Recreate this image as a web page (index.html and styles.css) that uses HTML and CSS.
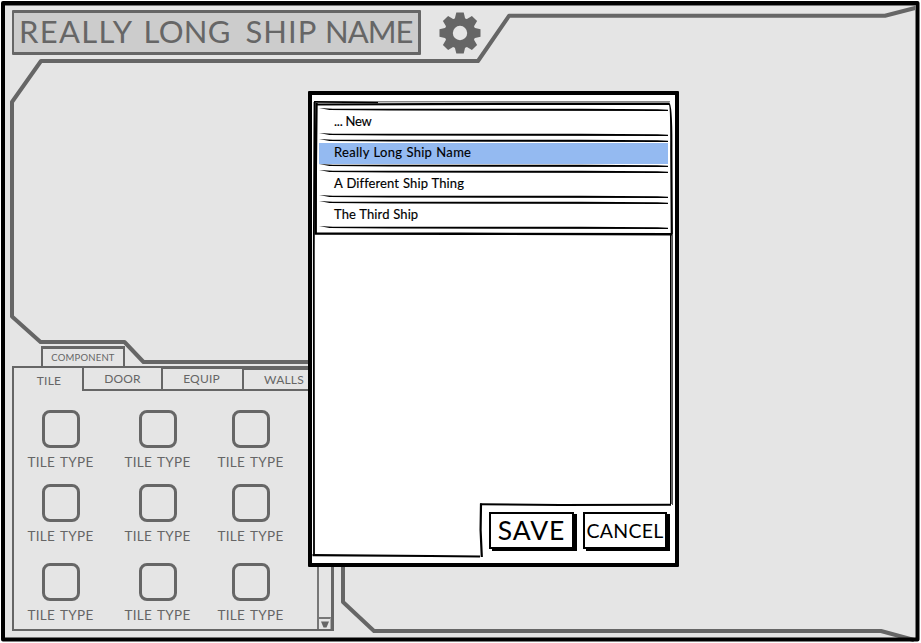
FILE: index.html
```html
<!DOCTYPE html>
<html lang="en">
<head>
<meta charset="utf-8">
<title>Ship Editor</title>
<link rel="stylesheet" href="styles.css">
</head>
<body>
<div class="screen">
  <svg class="hull" width="921" height="643" viewBox="0 0 921 643" aria-hidden="true">
    <path class="hull-line" d="M917 7.500L885 15.800H509L478 61H41L12 102V316.500L40.500 342H124.500L143.500 362H320"/>
    <path class="hull-line" d="M343 550V602L374 631H881L914 640"/>
    <path class="edge" d="M3 3H917.500V639.500H3Z"/>
    <path class="edge-shade" d="M5 5.500H915.500V637"/>
  </svg>

  <header class="topbar">
    <h1 class="ship-name"><span class="w1">REALLY</span> <span class="w2">LONG</span> <span class="w3">SHIP</span> <span class="w4">NAME</span></h1>
    <button class="settings" aria-label="Settings">
      <svg width="42" height="42" viewBox="-21 -21 42 42">
        <g fill="#666">
          <circle r="15.500"/>
          <path id="tooth" d="M-5.500 -13L-3.700 -20.500H3.700L5.500 -13V13L3.700 20.500H-3.700L-5.500 13Z"/>
          <use href="#tooth" transform="rotate(45)"/>
          <use href="#tooth" transform="rotate(90)"/>
          <use href="#tooth" transform="rotate(135)"/>
        </g>
        <circle r="7.200" fill="#e5e5e5"/>
      </svg>
    </button>
  </header>

  <section class="components">
    <div class="component-tab"><span>COMPONENT</span></div>
    <nav class="tabs">
      <div class="tab active"><span>TILE</span></div>
      <div class="tab door"><span>DOOR</span></div>
      <div class="tab equip"><span>EQUIP</span></div>
      <div class="tab walls"><span>WALLS</span></div>
    </nav>
    <div class="panel">
      <div class="tiles">
        <div class="tile"><i></i><span>TILE TYPE</span></div>
        <div class="tile"><i></i><span>TILE TYPE</span></div>
        <div class="tile"><i></i><span>TILE TYPE</span></div>
        <div class="tile"><i></i><span>TILE TYPE</span></div>
        <div class="tile"><i></i><span>TILE TYPE</span></div>
        <div class="tile"><i></i><span>TILE TYPE</span></div>
        <div class="tile"><i></i><span>TILE TYPE</span></div>
        <div class="tile"><i></i><span>TILE TYPE</span></div>
        <div class="tile"><i></i><span>TILE TYPE</span></div>
      </div>
      <div class="scrollbar">
        <div class="scroll-down"><svg width="8" height="7" viewBox="0 0 8 7"><path d="M0 .5H8L5.500 6.500H2.500Z" fill="#666"/></svg></div>
      </div>
    </div>
  </section>

  <div class="dialog">
    <svg class="dialog-lines" width="371" height="476" viewBox="308 91 371 476" aria-hidden="true">
      <path d="M314.500 102L313.800 250L314 555.500" stroke-width="1.800"/>
      <path d="M312.500 555.200L430 556L480 556.500" stroke-width="2.200"/>
      <path d="M481.800 557L480.600 530L481 503.500" stroke-width="2.200"/>
      <path d="M480 504.300L560 505L671 504.800" stroke-width="2"/>
      <path d="M670.800 234V504" stroke-width="1.600"/>
      <path d="M672.500 234V505" stroke="#555" stroke-width="1"/>
      <path d="M314 101.800L378 102.300" stroke-width="1.800"/>
      <path d="M378 101.800L670 101.700" stroke="#888" stroke-width="1.400"/>
      <path d="M316 104.500L500 103.900L669 103.800Q671.500 104 671.300 150L671.800 234" stroke-width="2.200"/>
      <path d="M316.500 103L315.800 170L315.700 233.500L460 233.800L672 234.200" stroke-width="2.400"/>
    </svg>
    <ul class="ships">
      <li><span class="new">... New</span></li>
      <li class="selected"><span class="long">Really Long Ship Name</span></li>
      <li><span class="different">A Different Ship Thing</span></li>
      <li><span class="third">The Third Ship</span></li>
    </ul>
    <div class="actions">
      <button class="btn save"><span>SAVE</span></button>
      <button class="btn cancel"><span>CANCEL</span></button>
    </div>
  </div>
</div>
</body>
</html>
```

FILE: styles.css
```css
* { box-sizing: border-box; margin: 0; padding: 0; }
body { background: #fff; font-family: Lato, "Liberation Sans", sans-serif; color: #666; overflow: hidden; }
.screen {
  position: relative;
  width: 921px;
  height: 643px;
  padding: 10px 0 0 12px;
  background: linear-gradient(#e5e5e5, #e5e5e5) 3px 3px / 914px 636px no-repeat #fff;
}
.hull { position: absolute; left: 0; top: 0; fill: none; }
.hull-line { stroke: #666; stroke-width: 4; stroke-linejoin: round; }
.edge { stroke: #000; stroke-width: 4; stroke-linejoin: round; }
.edge-shade { stroke: #777; stroke-width: 1; }

.topbar { position: relative; display: flex; align-items: flex-start; height: 336px; }
.ship-name {
  width: 409px; height: 45px; padding: 0 0 2px 5px;
  display: flex; align-items: center;
  background: #ccc; border: 3px solid #666; border-left-width: 2px; border-radius: 1px;
  font-weight: 400; font-size: 31px; line-height: 1; white-space: nowrap;
}
.w1 { width: 124.500px; letter-spacing: 1.300px; }
.w2 { width: 102px; letter-spacing: 0.300px; }
.w3 { width: 79.500px; letter-spacing: 1px; }
.w4 { letter-spacing: -1px; }
.settings { margin: 2px 0 0 18px; width: 42px; height: 42px; border: 0; background: none; }
.settings svg { display: block; }

.components { position: relative; width: 322px; }
.component-tab {
  width: 84px; height: 20px; margin-left: 29px;
  display: flex; align-items: center; justify-content: center;
  border: 2px solid #666; border-bottom: 0; border-top-width: 3px;
  font-size: 9.500px; letter-spacing: 0.2px;
}
.tabs { display: flex; align-items: flex-start; height: 25px; border-top: 2px solid #666; }
.tab {
  display: flex; align-items: center; justify-content: center;
  width: 80px; height: 23px; border-right: 2px solid #666; border-bottom: 2px solid #666;
  font-size: 12px; line-height: 1; letter-spacing: 0.2px;
}
.tab.active { width: 72px; height: 23px; border-left: 2px solid #666; border-bottom: 0; padding: 3px 0 0 2px; }
.tab.active { box-shadow: -0px 0 #666; }
.tab.door { width: 79px; }
.tab.equip { width: 81px; border-top: 1px solid #666; padding-right: 2px; }
.tab.walls { border-top: 2px solid #666; border-right: 0; }
.tabs { height: 23px; border-left: 0; }
.panel {
  display: flex; justify-content: space-between;
  height: 242px; border: 2px solid #666; border-top: 0; border-right-width: 3px;
}
.tiles {
  display: grid; grid-template-columns: 97px 93px 93px; grid-template-rows: 74px 79px 70px;
  padding-top: 21px; width: 283px;
}
.tile { width: 93px; display: flex; flex-direction: column; align-items: center; }
.tile i { width: 38px; height: 38px; border: 3px solid #666; border-radius: 8px; }
.tile span { margin-top: 7px; font-size: 13.500px; line-height: 14px; letter-spacing: 0.3px; word-spacing: 1.500px; white-space: nowrap; }
.scrollbar { width: 14px; margin-top: 2px; border-left: 2px solid #777; display: flex; align-items: flex-end; }
.scroll-down { width: 12px; height: 12px; border-top: 2px solid #777; border-right: 1px solid #aaa; padding: 2px 0 0 2px; line-height: 0; }

.dialog {
  position: absolute; left: 308px; top: 91px; width: 371px; height: 476px;
  background: #fff; border: 4px solid #000; border-radius: 1px; color: #000;
  display: flex; flex-direction: column; justify-content: space-between;
}
.dialog-lines { position: absolute; left: -4px; top: -4px; fill: none; stroke: #000; }
.ships { list-style: none; margin: 13px 7px 0; display: grid; row-gap: 3px; position: relative; }
.ships li {
  position: relative; height: 28px; padding: 0 0 2px 15px; display: flex; align-items: center;
  font-size: 13px; line-height: 1; -webkit-text-stroke: 0.15px #000;
}
.ships li::before, .ships li::after {
  content: ""; position: absolute; left: 0; right: 0; height: 3px; background: #000;
  clip-path: polygon(0 0, 4% 22%, 75% 22%, 97% 45%, 100% 60%, 100% 100%, 50% 92%, 20% 85%, 3% 66%);
}
.ships li::before { top: 0; }
.ships li::after { bottom: 0; }
.ships .selected { background: linear-gradient(#94baf1, #94baf1) 0 4px / 100% 21px no-repeat; }
.new { letter-spacing: -0.25px; }
.long { letter-spacing: 0.3px; word-spacing: 0.500px; }
.different { letter-spacing: 0.1px; word-spacing: 0.500px; }
.third { letter-spacing: 0.1px; word-spacing: 0.300px; }
.actions { position: relative; display: flex; gap: 9px; margin: 0 8px 14px 177px; }
.btn {
  height: 37px; background: #fff; border: 2px solid #000; box-shadow: 3px 2px #000;
  color: #000; font-family: inherit; display: flex; align-items: center; justify-content: center; line-height: 1;
}
.btn.save { width: 85px; font-size: 26.500px; letter-spacing: 0.9px; }
.btn.cancel { width: 84px; font-size: 19.500px; letter-spacing: 0.3px; }
```
